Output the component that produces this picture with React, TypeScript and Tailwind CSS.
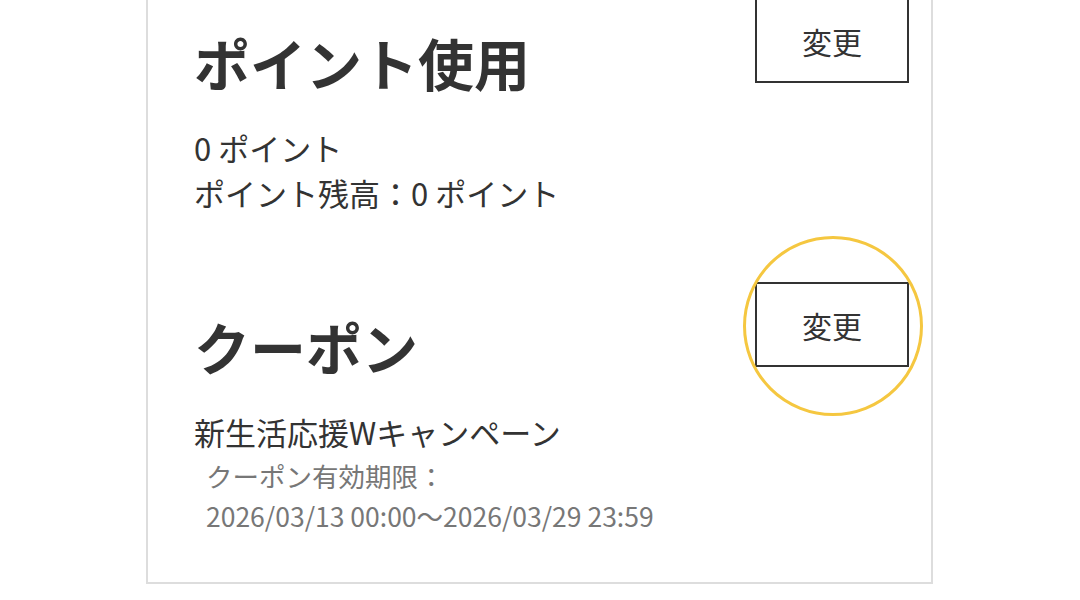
import React from "react";

const ChangeButton = ({ highlight }: { highlight?: boolean }) => {
  return (
    <div className="relative shrink-0">
      <button className="w-[154px] h-[85px] border-2 border-[#333] bg-white text-[30px] leading-none text-[#333]">
        変更
      </button>
      {highlight && (
        <div className="absolute left-[-12px] top-[-46px] w-[180px] h-[180px] rounded-full border-[3px] border-[#f5c740] pointer-events-none"></div>
      )}
    </div>
  );
};

const App = () => {
  return (
    <div
      className="w-[1080px] h-[600px] overflow-hidden bg-white text-[#333]"
      style={{ fontFamily: '"Noto Sans CJK JP", "Noto Sans", sans-serif' }}
    >
      <div className="ml-[146px] w-[787px] -mt-[23px] border-2 border-[#ddd] pt-[19px] pb-[46px] pl-[46px] pr-[22px]">
        {/* ポイント */}
        <section>
          <div className="flex items-start justify-between">
            <h2 className="mt-[24px] text-[56px] font-bold leading-[80px]">ポイント使用</h2>
            <ChangeButton />
          </div>
          <div className="mt-[23px] text-[31px] leading-[45px]">
            <p>0 ポイント</p>
            <p>ポイント残高：0 ポイント</p>
          </div>
        </section>

        {/* クーポン */}
        <section className="mt-[67px]">
          <div className="flex items-start justify-between">
            <h2 className="mt-[24px] text-[56px] font-bold leading-[80px]">クーポン</h2>
            <ChangeButton highlight />
          </div>
          <div className="mt-[23px]">
            <p className="text-[31px] leading-[45px]">新生活応援Wキャンペーン</p>
            <div className="mt-[2px] pl-[12px] text-[26.5px] leading-[40px] text-[#777]">
              <p>クーポン有効期限：</p>
              <p>2026/03/13 00:00〜2026/03/29 23:59</p>
            </div>
          </div>
        </section>
      </div>
    </div>
  );
};

export default App;
